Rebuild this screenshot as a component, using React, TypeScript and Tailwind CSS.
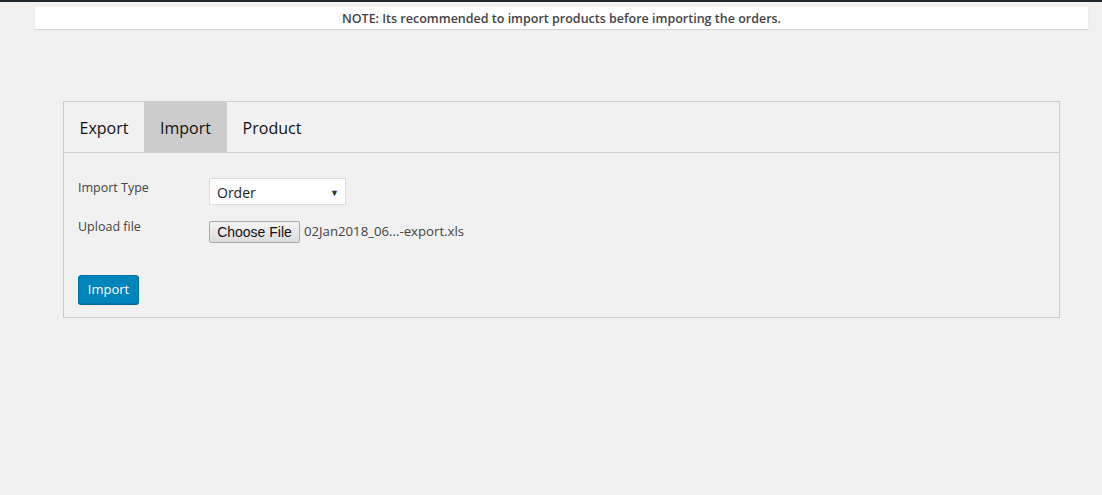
import React from "react";

export default function App() {
  return (
    <div className="w-[1102px] h-[495px] bg-[#f1f1f1] overflow-hidden" style={{ fontFamily: '"Open Sans", "Noto Sans", sans-serif' }}>
      <div className="h-[2px] bg-[#23282d]" />
      <div className="pt-[5px] pl-[35px] pr-[14px]">
        <div className="h-[22px] bg-white shadow-[0_1px_1px_rgba(0,0,0,0.1)] flex items-center justify-center pt-[3px] text-[12.5px] font-semibold text-[#444]">
          NOTE: Its recommended to import products before importing the orders.
        </div>
      </div>
      <div className="pt-[72px] pl-[63px]">
        <div className="w-[997px] h-[217px] border border-[#ccc] flex flex-col">
          <div className="h-[51px] border-b border-[#ccc] flex text-[16px] text-[#111]">
            <div className="w-[80px] flex items-center justify-center pt-[2px]">Export</div>
            <div className="w-[83px] bg-[#ccc] flex items-center justify-center pt-[2px]">Import</div>
            <div className="w-[90px] flex items-center justify-center pt-[2px]">Product</div>
          </div>
          <div className="pl-[14px] pt-[25px] text-[12.5px] text-[#444]">
            <div className="flex h-[27px]">
              <div className="w-[131px] pt-[1px]">Import Type</div>
              <div className="w-[137px] h-[27px] bg-white border border-[#ddd] flex items-center justify-between pl-[7px] pr-[6px] pt-[2px] text-[14px] text-[#222]">
                <span>Order</span>
                <span className="text-[9px] text-[#333]">▼</span>
              </div>
            </div>
            <div className="flex mt-[16px] h-[22px]">
              <div className="w-[131px] -mt-[3px]">Upload file</div>
              <div className="flex items-center">
                <div className="w-[91px] h-[22px] border border-[#aaa] rounded-[2px] bg-gradient-to-b from-[#f5f5f5] to-[#dcdcdc] flex items-center justify-center text-[14px] text-[#111]" style={{ fontFamily: '"Liberation Sans", Arial, sans-serif' }}>
                  Choose File
                </div>
                <span className="ml-[4px] text-[13.2px] text-[#444]">02Jan2018_06...-export.xls</span>
              </div>
            </div>
            <div className="mt-[32px]">
              <div className="w-[61px] h-[29px] bg-[#0085ba] border border-[#0073aa] rounded-[3px] shadow-[0_1px_0_#006799] flex items-center justify-center pt-[1px] text-white text-[13px]">
                Import
              </div>
            </div>
          </div>
        </div>
      </div>
    </div>
  );
}
